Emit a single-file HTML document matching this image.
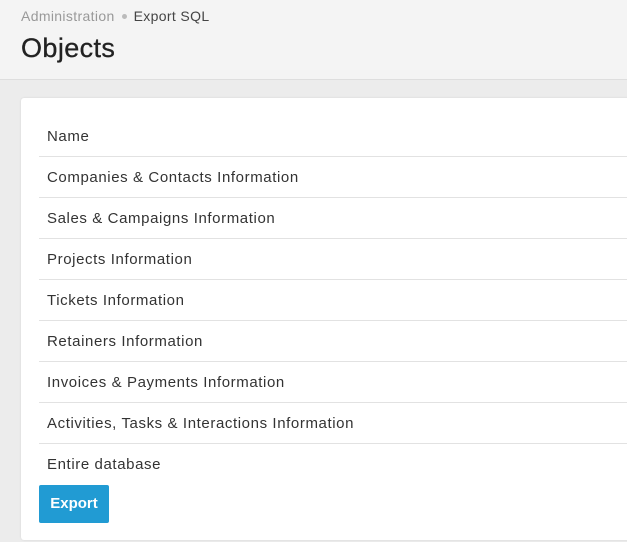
<html><head><style>
body{margin:0;width:627px;height:542px;background:#ececec;font-family:"Liberation Sans",sans-serif;overflow:hidden;position:relative}
.hdr{position:absolute;left:0;top:0;width:627px;height:79px;background:#f4f4f4;border-bottom:1px solid #dedede}
.bc{position:absolute;left:21px;top:8px;font-size:14px;color:#999;letter-spacing:0.35px}
.bc span{color:#444}
.bc i{display:inline-block;width:5px;height:5px;border-radius:50%;background:#bbb;margin:0 7px 2px 7px;vertical-align:middle}
h1{position:absolute;left:21px;top:33px;margin:0;font-size:27px;font-weight:normal;color:#222;letter-spacing:0.4px;-webkit-text-stroke:0.3px #222}
.card{position:absolute;left:21px;top:98px;width:620px;height:442px;background:#fff;border-radius:3px;box-shadow:0 0 2px rgba(0,0,0,.1)}
.row{position:absolute;left:18px;width:610px;height:41px;line-height:42px;font-size:15px;color:#333;padding-left:8px;box-sizing:border-box;letter-spacing:0.6px}
.row.b{border-bottom:1px solid #e2e2e2}
.btn{position:absolute;left:18px;top:387px;width:70px;height:38px;background:#219bd3;border-radius:2px;color:#fff;font-size:15px;font-weight:bold;line-height:38px;text-align:center}
</style></head><body>
<div class="hdr"><div class="bc">Administration<i></i><span>Export SQL</span></div><h1>Objects</h1></div>
<div class="card">
<div class="row b" style="top:18px">Name</div>
<div class="row b" style="top:59px">Companies &amp; Contacts Information</div>
<div class="row b" style="top:100px">Sales &amp; Campaigns Information</div>
<div class="row b" style="top:141px">Projects Information</div>
<div class="row b" style="top:182px">Tickets Information</div>
<div class="row b" style="top:223px">Retainers Information</div>
<div class="row b" style="top:264px">Invoices &amp; Payments Information</div>
<div class="row b" style="top:305px">Activities, Tasks &amp; Interactions Information</div>
<div class="row" style="top:346px">Entire database</div>
<div class="btn">Export</div>
</div>
</body></html>
